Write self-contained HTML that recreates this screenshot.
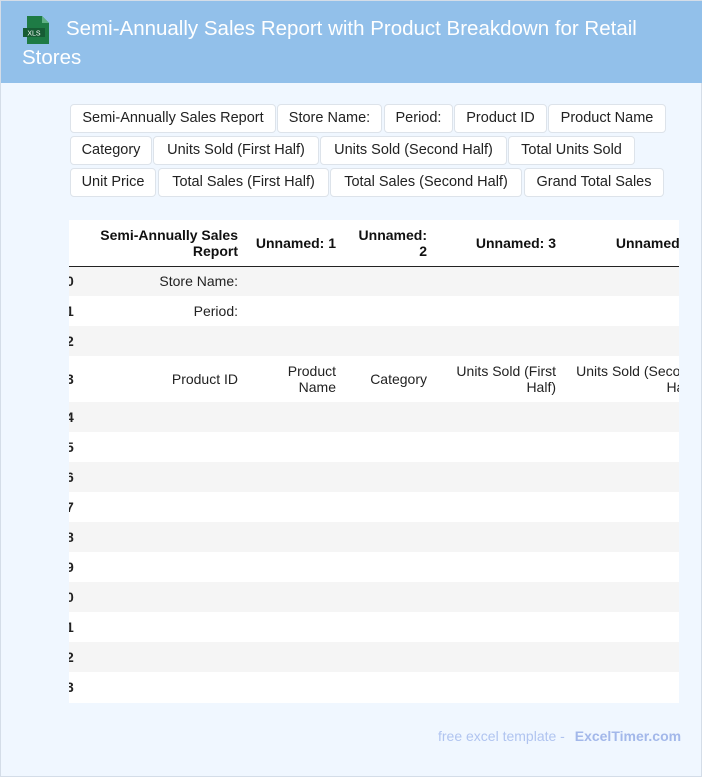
<!DOCTYPE html>
<html><head><meta charset="utf-8"><style>
*{box-sizing:border-box;margin:0;padding:0}
body{width:702px;height:777px;background:#f0f7ff;font-family:"Liberation Sans",Arial,sans-serif;position:relative;overflow:hidden;border:1px solid #d4dde8}
.hd{position:absolute;left:0;top:0;width:702px;height:82px;background:#92c0ea;color:#fff;font-size:20.5px;line-height:29px;padding:13px 20px 0 21px;text-indent:44px}
.ic{position:absolute;left:21px;top:14px;width:30px;height:30px}
.b{position:absolute;height:29px;background:#fff;border:1px solid #dde3ea;border-radius:4px;font-size:14.5px;color:#222;text-align:center;line-height:27px;white-space:nowrap}
.tw{position:absolute;left:68px;top:219px;width:610px;height:483px;overflow:hidden;background:#fff}
table{border-collapse:collapse;position:absolute;left:-8px;top:0;width:640px;font-size:14px;color:#222;table-layout:fixed}
td,th{text-align:right;padding:0 5px;overflow:hidden;white-space:normal;line-height:16px}
th{font-weight:bold;font-size:14px;height:46px;border-bottom:1.5px solid #222;color:#111;white-space:nowrap}
tr.r td{height:30px}
tr.t td{height:46px}
tr:nth-child(odd) td{background:#f5f5f5}
tbody tr:nth-child(even) td{background:#fff}
.ft{position:absolute;left:437px;top:727px;font-size:14px;color:#b0c4f0}
.ft b{color:#a3b8ea;margin-left:6px}
</style></head><body>
<div class="hd">Semi-Annually Sales Report with Product Breakdown for Retail Stores</div>
<svg class="ic" viewBox="0 0 30 30"><path d="M5 1h15l7 7v21H5z" fill="#1e7b45"/><path d="M20 1v7h7z" fill="#5fb184"/><rect x="1" y="13" width="22" height="9" fill="#165c34"/><text x="12" y="20.5" font-size="7" fill="#fff" text-anchor="middle" font-family="Liberation Sans">XLS</text></svg>
<div class="b" style="left:69px;top:103px;width:206px">Semi-Annually Sales Report</div>
<div class="b" style="left:276px;top:103px;width:105px">Store Name:</div>
<div class="b" style="left:383px;top:103px;width:69px">Period:</div>
<div class="b" style="left:453px;top:103px;width:93px">Product ID</div>
<div class="b" style="left:547px;top:103px;width:118px">Product Name</div>
<div class="b" style="left:69px;top:135px;width:82px">Category</div>
<div class="b" style="left:152px;top:135px;width:166px">Units Sold (First Half)</div>
<div class="b" style="left:319px;top:135px;width:187px">Units Sold (Second Half)</div>
<div class="b" style="left:507px;top:135px;width:127px">Total Units Sold</div>
<div class="b" style="left:69px;top:167px;width:86px">Unit Price</div>
<div class="b" style="left:157px;top:167px;width:171px">Total Sales (First Half)</div>
<div class="b" style="left:329px;top:167px;width:192px">Total Sales (Second Half)</div>
<div class="b" style="left:523px;top:167px;width:140px">Grand Total Sales</div>
<div class="tw"><table>
<colgroup><col style="width:16px"><col style="width:166px"><col style="width:98px"><col style="width:91px"><col style="width:129px"><col style="width:140px"></colgroup>
<thead><tr><th></th><th>Semi-Annually Sales<br>Report</th><th>Unnamed: 1</th><th>Unnamed:<br>2</th><th>Unnamed: 3</th><th>Unnamed: 4</th></tr></thead>
<tbody>
<tr class="r"><td><b>0</b></td><td>Store Name:</td><td></td><td></td><td></td><td></td></tr>
<tr class="r"><td><b>1</b></td><td>Period:</td><td></td><td></td><td></td><td></td></tr>
<tr class="r"><td><b>2</b></td><td></td><td></td><td></td><td></td><td></td></tr>
<tr class="t"><td><b>3</b></td><td>Product ID</td><td>Product Name</td><td>Category</td><td>Units Sold (First Half)</td><td>Units Sold (Second Half)</td></tr>
<tr class="r"><td><b>4</b></td><td></td><td></td><td></td><td></td><td></td></tr>
<tr class="r"><td><b>5</b></td><td></td><td></td><td></td><td></td><td></td></tr>
<tr class="r"><td><b>6</b></td><td></td><td></td><td></td><td></td><td></td></tr>
<tr class="r"><td><b>7</b></td><td></td><td></td><td></td><td></td><td></td></tr>
<tr class="r"><td><b>8</b></td><td></td><td></td><td></td><td></td><td></td></tr>
<tr class="r"><td><b>9</b></td><td></td><td></td><td></td><td></td><td></td></tr>
<tr class="r"><td><b>0</b></td><td></td><td></td><td></td><td></td><td></td></tr>
<tr class="r"><td><b>1</b></td><td></td><td></td><td></td><td></td><td></td></tr>
<tr class="r"><td><b>2</b></td><td></td><td></td><td></td><td></td><td></td></tr>
<tr class="r"><td><b>3</b></td><td></td><td></td><td></td><td></td><td></td></tr>
</tbody></table></div>
<div class="ft">free excel template - <b>ExcelTimer.com</b></div>
</body></html>
